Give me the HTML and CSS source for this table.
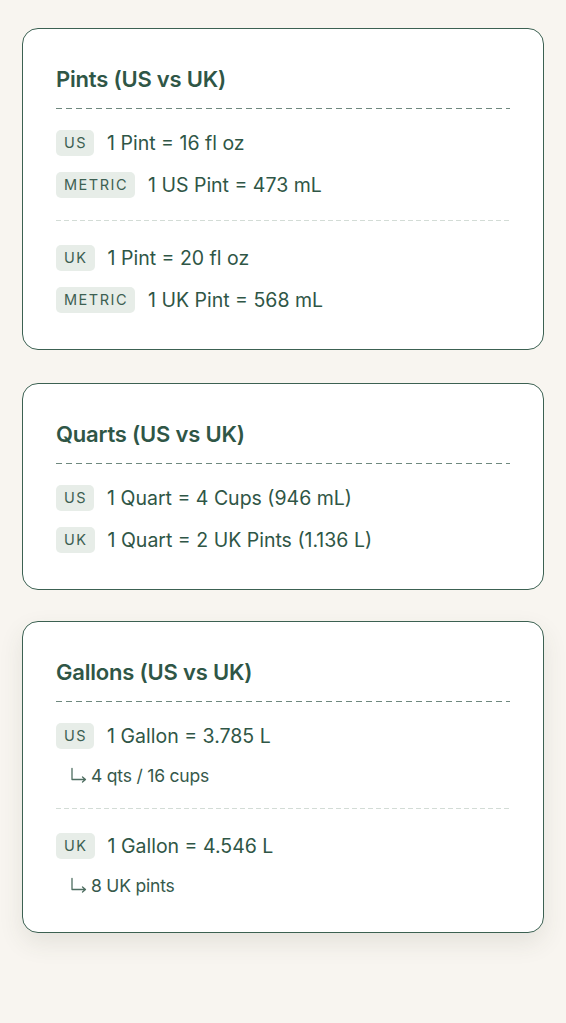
FILE: index.html
```html
<!DOCTYPE html>
<html lang="en">
<head>
<meta charset="utf-8">
<link rel="stylesheet" href="styles.css">
</head>
<body>
<main class="stack">
  <section class="card">
    <h2 class="card-title">Pints (US vs UK)</h2>
    <div class="group">
      <div class="row"><span class="tag">US</span><span class="val">1 Pint = 16 fl oz</span></div>
      <div class="row"><span class="tag">METRIC</span><span class="val">1 US Pint = 473 mL</span></div>
    </div>
    <div class="group">
      <div class="row"><span class="tag">UK</span><span class="val">1 Pint = 20 fl oz</span></div>
      <div class="row"><span class="tag">METRIC</span><span class="val">1 UK Pint = 568 mL</span></div>
    </div>
  </section>
  <section class="card">
    <h2 class="card-title">Quarts (US vs UK)</h2>
    <div class="group">
      <div class="row"><span class="tag">US</span><span class="val">1 Quart = 4 Cups (946 mL)</span></div>
      <div class="row"><span class="tag">UK</span><span class="val">1 Quart = 2 UK Pints (1.136 L)</span></div>
    </div>
  </section>
  <section class="card lifted">
    <h2 class="card-title">Gallons (US vs UK)</h2>
    <div class="group">
      <div class="row"><span class="tag">US</span><span class="val">1 Gallon = 3.785 L</span></div>
      <div class="sub"><svg class="arrow" width="18" height="16" viewBox="0 0 18 16"><path d="M2 1.5V12.5H15M12.5 10L15.5 12.5L12.5 15" fill="none" stroke="#4e6e61" stroke-width="1.3" stroke-linecap="round" stroke-linejoin="round"/></svg>4 qts / 16 cups</div>
    </div>
    <div class="group">
      <div class="row"><span class="tag">UK</span><span class="val">1 Gallon = 4.546 L</span></div>
      <div class="sub"><svg class="arrow" width="18" height="16" viewBox="0 0 18 16"><path d="M2 1.5V12.5H15M12.5 10L15.5 12.5L12.5 15" fill="none" stroke="#4e6e61" stroke-width="1.3" stroke-linecap="round" stroke-linejoin="round"/></svg>8 UK pints</div>
    </div>
  </section>
</main>
</body>
</html>
```
FILE: styles.css
```css
html, body {
  margin: 0;
  padding: 0;
  background: #f8f5f0;
}
body {
  font-family: "Inter", "Noto Sans", sans-serif;
  color: #2f5646;
}
.stack {
  display: flex;
  flex-direction: column;
  gap: 33px;
  padding: 28px 22px 60px;
}
.card {
  background: #ffffff;
  border: 1.5px solid #3c6152;
  border-radius: 16px;
  padding: 35px 33px 34px;
}
.card.lifted {
  transform: translateY(-2px);
  box-shadow: 0 10px 24px rgba(60, 70, 50, 0.10);
}
.card-title {
  margin: 0;
  font-size: 22px;
  font-weight: 600;
  letter-spacing: -0.2px;
  line-height: 30px;
  padding-bottom: 15px;
  background-image: repeating-linear-gradient(to right, #6f887e 0 6px, transparent 6px 10px);
  background-size: 100% 1px;
  background-repeat: no-repeat;
  background-position: left bottom;
}
.group {
  display: flex;
  flex-direction: column;
  gap: 12px;
  padding: 19px 0 21px;
  background-image: repeating-linear-gradient(to right, #d3dcd6 0 5px, transparent 5px 8px);
  background-size: 100% 1px;
  background-repeat: no-repeat;
  background-position: left bottom;
}
.group + .group {
  padding-top: 22px;
}
.group:last-child {
  background-image: none;
  padding-bottom: 0;
}
.row {
  display: flex;
  align-items: center;
  gap: 13px;
  height: 30px;
}
.tag {
  background: #e7ede8;
  border-radius: 5px;
  font-size: 14.5px;
  letter-spacing: 1.5px;
  line-height: 26px;
  padding: 0 7px 0 8px;
  color: #3d6052;
}
.val {
  font-size: 19.5px;
  letter-spacing: 0;
}
.sub {
  display: flex;
  align-items: center;
  font-size: 17.5px;
  letter-spacing: -0.2px;
  padding-left: 14px;
  margin-top: 1px;
  line-height: 24px;
  color: #36594b;
}
.arrow {
  flex: none;
  margin-right: 3px;
  margin-top: -3px;
}
```
